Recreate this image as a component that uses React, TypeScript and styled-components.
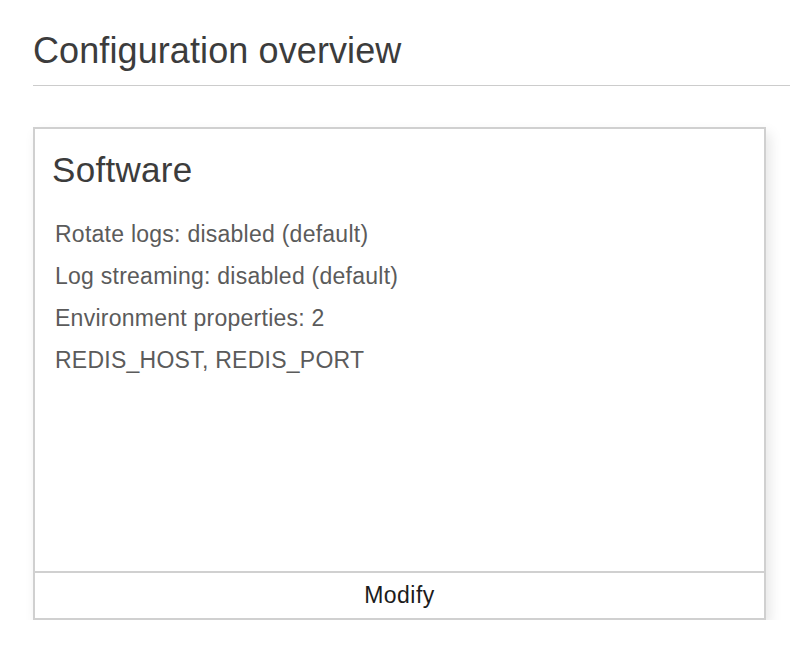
import React from "react"
import styled, { createGlobalStyle } from "styled-components"

const GlobalStyle = createGlobalStyle`
    html, body {
        margin: 0;
        padding: 0;
        background: #ffffff;
        font-family: "Liberation Sans", Arial, Helvetica, sans-serif;
    }
`

const Page = styled.div`
    padding: 30px 0 0 33px;
`

const PageTitle = styled.h1`
    margin: 0;
    padding-bottom: 13px;
    border-bottom: 1px solid #cccccc;
    font-size: 36px;
    font-weight: 400;
    line-height: normal;
    letter-spacing: 0.1px;
    color: #3c3c3c;
`

const Card = styled.section`
    margin: 41px 24px 0 0;
    border: 2px solid #d0d0d0;
    background: #ffffff;
    box-shadow: 4px 6px 12px rgba(0, 0, 0, 0.1);
    display: flex;
    flex-direction: column;
`

const CardBody = styled.div`
    height: 421px;
    padding: 21px 17px 0;
`

const CardTitle = styled.h2`
    margin: 0 0 23px;
    font-size: 35px;
    font-weight: 400;
    line-height: normal;
    letter-spacing: 0.3px;
    color: #3c3c3c;
`

const PropList = styled.ul`
    list-style: none;
    margin: 0;
    padding: 0 0 0 3px;
`

const PropItem = styled.li`
    font-size: 23px;
    line-height: 42px;
    letter-spacing: 0.25px;
    color: #5b5b5b;
`

const CardFooter = styled.button`
    display: block;
    width: 100%;
    height: 47px;
    margin: 0;
    padding: 0;
    border: 0;
    border-top: 2px solid #d0d0d0;
    background: #ffffff;
    font-family: inherit;
    font-size: 23px;
    letter-spacing: 0.5px;
    color: #1c1c1c;
    cursor: pointer;
`

const items = [
    "Rotate logs: disabled (default)",
    "Log streaming: disabled (default)",
    "Environment properties: 2",
    "REDIS_HOST, REDIS_PORT",
]

export default function App() {
    return (
        <>
            <GlobalStyle />
            <Page>
                <PageTitle>Configuration overview</PageTitle>
                <Card>
                    <CardBody>
                        <CardTitle>Software</CardTitle>
                        <PropList>
                            {items.map((text) => (
                                <PropItem key={text}>{text}</PropItem>
                            ))}
                        </PropList>
                    </CardBody>
                    <CardFooter>Modify</CardFooter>
                </Card>
            </Page>
        </>
    )
}
